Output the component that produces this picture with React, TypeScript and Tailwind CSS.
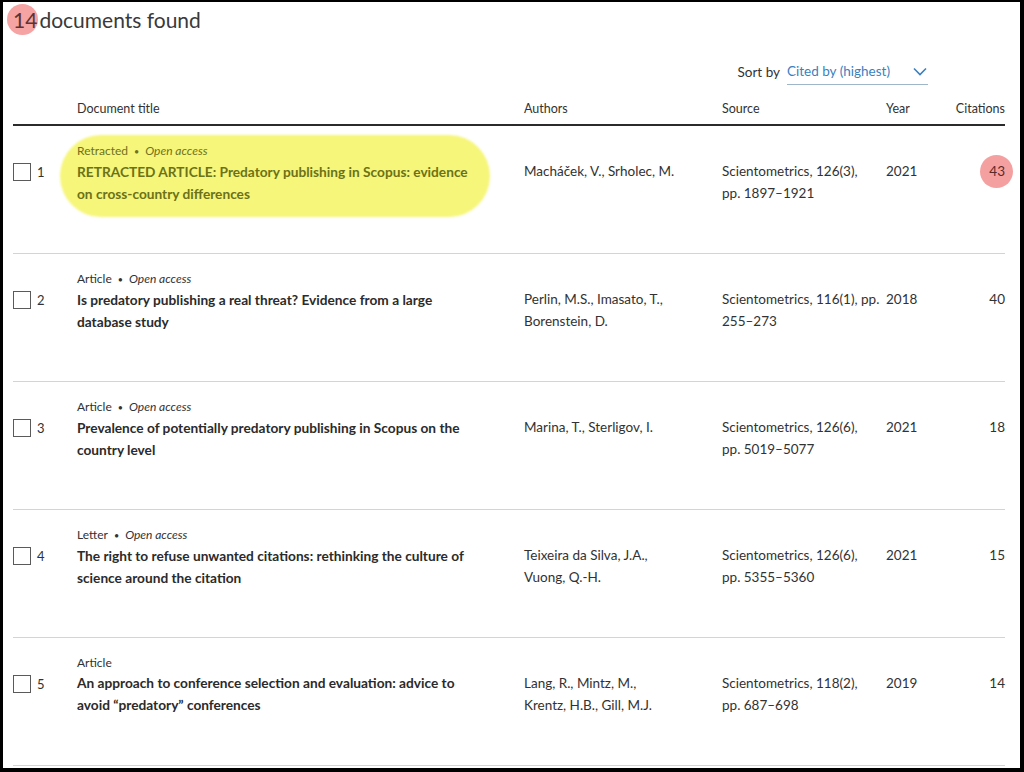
import React from 'react'

type Doc = {
  n: number
  type: string
  open: boolean
  title: string[]
  authors: string[]
  source: string[]
  year: string
  cites: string
}

const docs: Doc[] = [
  {
    n: 1,
    type: 'Retracted',
    open: true,
    title: ['RETRACTED ARTICLE: Predatory publishing in Scopus: evidence', 'on cross-country differences'],
    authors: ['Macháček, V., Srholec, M.'],
    source: ['Scientometrics, 126(3),', 'pp. 1897–1921'],
    year: '2021',
    cites: '43'
  },
  {
    n: 2,
    type: 'Article',
    open: true,
    title: ['Is predatory publishing a real threat? Evidence from a large', 'database study'],
    authors: ['Perlin, M.S., Imasato, T.,', 'Borenstein, D.'],
    source: ['Scientometrics, 116(1), pp.', '255–273'],
    year: '2018',
    cites: '40'
  },
  {
    n: 3,
    type: 'Article',
    open: true,
    title: ['Prevalence of potentially predatory publishing in Scopus on the', 'country level'],
    authors: ['Marina, T., Sterligov, I.'],
    source: ['Scientometrics, 126(6),', 'pp. 5019–5077'],
    year: '2021',
    cites: '18'
  },
  {
    n: 4,
    type: 'Letter',
    open: true,
    title: ['The right to refuse unwanted citations: rethinking the culture of', 'science around the citation'],
    authors: ['Teixeira da Silva, J.A.,', 'Vuong, Q.-H.'],
    source: ['Scientometrics, 126(6),', 'pp. 5355–5360'],
    year: '2021',
    cites: '15'
  },
  {
    n: 5,
    type: 'Article',
    open: false,
    title: ['An approach to conference selection and evaluation: advice to', 'avoid “predatory” conferences'],
    authors: ['Lang, R., Mintz, M.,', 'Krentz, H.B., Gill, M.J.'],
    source: ['Scientometrics, 118(2),', 'pp. 687–698'],
    year: '2019',
    cites: '14'
  }
]

function Lines({ lines, className = '' }: { lines: string[]; className?: string }) {
  return (
    <div className={className}>
      {lines.map((l, i) => (
        <div key={i} className="whitespace-nowrap">
          {l}
        </div>
      ))}
    </div>
  )
}

function Row({ doc }: { doc: Doc }) {
  const retracted = doc.n === 1
  return (
    <div className="grid grid-cols-[64px_447px_198px_164px_60px_1fr] h-[128px] border-b border-[#d4d4d4] pt-[15px] text-[13.5px] leading-[22px] text-[#323232]">
      {/* checkbox + index */}
      <div className="flex items-start gap-[6px] pt-[22px]">
        <div className="w-[18px] h-[18px] border-[1.5px] border-[#5a5a5a] bg-white" />
        <span className="text-[13px] leading-[18px]">{doc.n}</span>
      </div>

      {/* title */}
      <div className="relative">
        {retracted && (
          <div className="absolute left-[-17px] top-[-6px] w-[430px] h-[82px] rounded-full bg-[#f6f67a] blur-[1px]" />
        )}
        <div className="relative">
          <div className={`text-[12px] leading-[19px] ${retracted ? 'text-[#6f7220]' : 'text-[#323232]'}`}>
            {doc.type}
            {doc.open && (
              <>
                <span className="mx-[6px] text-[9px] align-middle">•</span>
                <span className="italic">Open access</span>
              </>
            )}
          </div>
          <Lines
            lines={doc.title}
            className={`font-bold text-[13.7px] leading-[22px] ${retracted ? 'text-[#6b7218]' : 'text-[#2b2b2b]'}`}
          />
        </div>
      </div>

      <Lines lines={doc.authors} className="pt-[19px]" />
      <Lines lines={doc.source} className="pt-[19px]" />
      <div className="pt-[19px]">{doc.year}</div>
      <div className="pt-[19px] flex justify-end">
        {retracted ? (
          <div className="relative flex justify-end">
            <div className="absolute right-[-8px] top-[-5px] w-[33px] h-[33px] rounded-full bg-[#f5a0a0]" />
            <span className="relative text-[#5a2a2a]">{doc.cites}</span>
          </div>
        ) : (
          <span>{doc.cites}</span>
        )}
      </div>
    </div>
  )
}

export default function App() {
  return (
    <div
      className="w-[1024px] h-[772px] bg-white border-t-2 border-l-[3px] border-r-4 border-b-4 border-black overflow-hidden"
      style={{ fontFamily: 'Lato, "Open Sans", sans-serif' }}
    >
      <div className="pl-[10px] pr-[15px]">
        {/* heading */}
        <div className="h-[36px] flex items-center">
          <div className="relative flex items-center">
            <div className="absolute left-[-6px] top-[-3px] w-[31px] h-[31px] rounded-full bg-[#f5a3a3]" />
            <span className="relative text-[21px] leading-[26px] text-[#5b3333]">14</span>
          </div>
          <span className="text-[21px] leading-[26px] text-[#3a3a3a] ml-[2px]">documents found</span>
        </div>

        {/* sort by */}
        <div className="mt-[21px] h-[26px] flex items-center justify-end pr-[77px]">
          <span className="text-[13.5px] text-[#323232] mr-[7px]">Sort by</span>
          <div className="w-[141px] h-[26px] flex items-center justify-between border-b border-[#9fb6c8]">
            <span className="text-[13.5px] text-[#3b7fbf]">Cited by (highest)</span>
            <svg width="14" height="9" viewBox="0 0 14 9" className="mr-[1px]">
              <path d="M1 1.5 L7 7.5 L13 1.5" fill="none" stroke="#3b7fbf" strokeWidth="1.6" />
            </svg>
          </div>
        </div>

        {/* header */}
        <div className="grid grid-cols-[64px_447px_198px_164px_60px_1fr] h-[41px] items-end pb-[6px] border-b-2 border-[#2b2b2b] text-[12.5px] leading-[18px] text-[#323232]">
          <div />
          <div>Document title</div>
          <div>Authors</div>
          <div>Source</div>
          <div>Year</div>
          <div className="text-right">Citations</div>
        </div>

        {docs.map(d => (
          <Row key={d.n} doc={d} />
        ))}
      </div>
    </div>
  )
}
